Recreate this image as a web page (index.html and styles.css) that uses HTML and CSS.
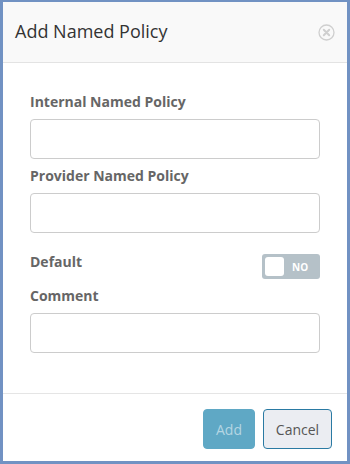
FILE: index.html
```html
<!DOCTYPE html>
<html>
<head>
<meta charset="utf-8">
<link rel="stylesheet" href="styles.css">
</head>
<body>
<div class="modal">
  <div class="modal-header">
    <h4 class="modal-title">Add Named Policy</h4>
    <span class="close">
      <svg width="17" height="17" viewBox="0 0 17 17">
        <circle cx="8.5" cy="8.5" r="7.5" fill="none" stroke="#cfcfcf" stroke-width="1.3"/>
        <path d="M5.8 5.8 L11.2 11.2 M11.2 5.8 L5.8 11.2" stroke="#cfcfcf" stroke-width="2" stroke-linecap="round"/>
      </svg>
    </span>
  </div>
  <div class="modal-body">
    <div class="group">
      <label class="lbl">Internal Named Policy</label>
      <input class="field" type="text">
    </div>
    <div class="group">
      <label class="lbl">Provider Named Policy</label>
      <input class="field" type="text">
    </div>
    <div class="group row">
      <label class="lbl">Default</label>
      <span class="toggle"><span class="knob"></span><span class="toggle-text">NO</span></span>
    </div>
    <div class="group">
      <label class="lbl">Comment</label>
      <input class="field" type="text">
    </div>
  </div>
  <div class="modal-footer">
    <button class="btn btn-add">Add</button>
    <button class="btn btn-cancel">Cancel</button>
  </div>
</div>
</body>
</html>
```
FILE: styles.css
```css
html, body {
  margin: 0;
  padding: 0;
  background: #ffffff;
}
body {
  font-family: "Open Sans", "Noto Sans", sans-serif;
  width: 350px;
  height: 464px;
}
.modal {
  box-sizing: border-box;
  width: 350px;
  height: 464px;
  border-style: solid;
  border-color: #7192c3;
  border-width: 2px 3px 3px 3px;
  background: #fff;
  display: flex;
  flex-direction: column;
}
.modal-header {
  height: 60px;
  background: #f9f9f9;
  border-bottom: 1px solid #e3e3e3;
  display: flex;
  align-items: center;
  justify-content: space-between;
  padding: 0 12px 0 12px;
}
.modal-title {
  margin: 0;
  font-size: 18px;
  font-weight: 400;
  color: #333;
  line-height: 24px;
  position: relative;
  top: -1px;
}
.close {
  display: flex;
  width: 17px;
  height: 17px;
}
.modal-body {
  flex: 1;
  padding: 29px 27px 0 27px;
  border-bottom: 1px solid #e5e5e5;
}
.group {
  display: flex;
  flex-direction: column;
  margin-bottom: 7px;
}
.lbl {
  font-size: 14px;
  font-weight: 700;
  color: #666;
  line-height: 20px;
  margin-bottom: 7px;
}
.field {
  box-sizing: border-box;
  height: 40px;
  width: 290px;
  border: 1px solid #cccccc;
  border-radius: 4px;
  margin: 0;
  padding: 6px 12px;
  font-family: inherit;
  font-size: 14px;
}
.group.row {
  flex-direction: row;
  align-items: flex-start;
  justify-content: space-between;
  height: 27px;
  margin-top: 19px;
  margin-bottom: 7px;
}
.group.row .lbl {
  margin-bottom: 0;
}
.toggle {
  box-sizing: border-box;
  width: 58px;
  height: 25px;
  margin-top: 2px;
  background: #b5c1c8;
  border-radius: 3px;
  display: flex;
  align-items: center;
  padding-left: 3px;
}
.knob {
  width: 19px;
  height: 19px;
  background: #fff;
  border-radius: 3px;
}
.toggle-text {
  color: #fff;
  font-size: 10px;
  font-weight: 700;
  margin-left: 8px;
  line-height: 12px;
}
.modal-footer {
  display: flex;
  justify-content: flex-end;
  gap: 8px;
  padding: 15px 15px 12px 0;
}
.btn {
  box-sizing: border-box;
  height: 40px;
  border-radius: 4px;
  font-family: inherit;
  font-size: 14px;
  padding: 0;
  margin: 0;
}
.btn-add {
  width: 52px;
  background: #5fa8c5;
  border: 1px solid #5fa8c5;
  color: #b4d6e3;
}
.btn-cancel {
  width: 69px;
  background: #ebedf2;
  border: 1px solid #2a7aa3;
  color: #555;
}
```
